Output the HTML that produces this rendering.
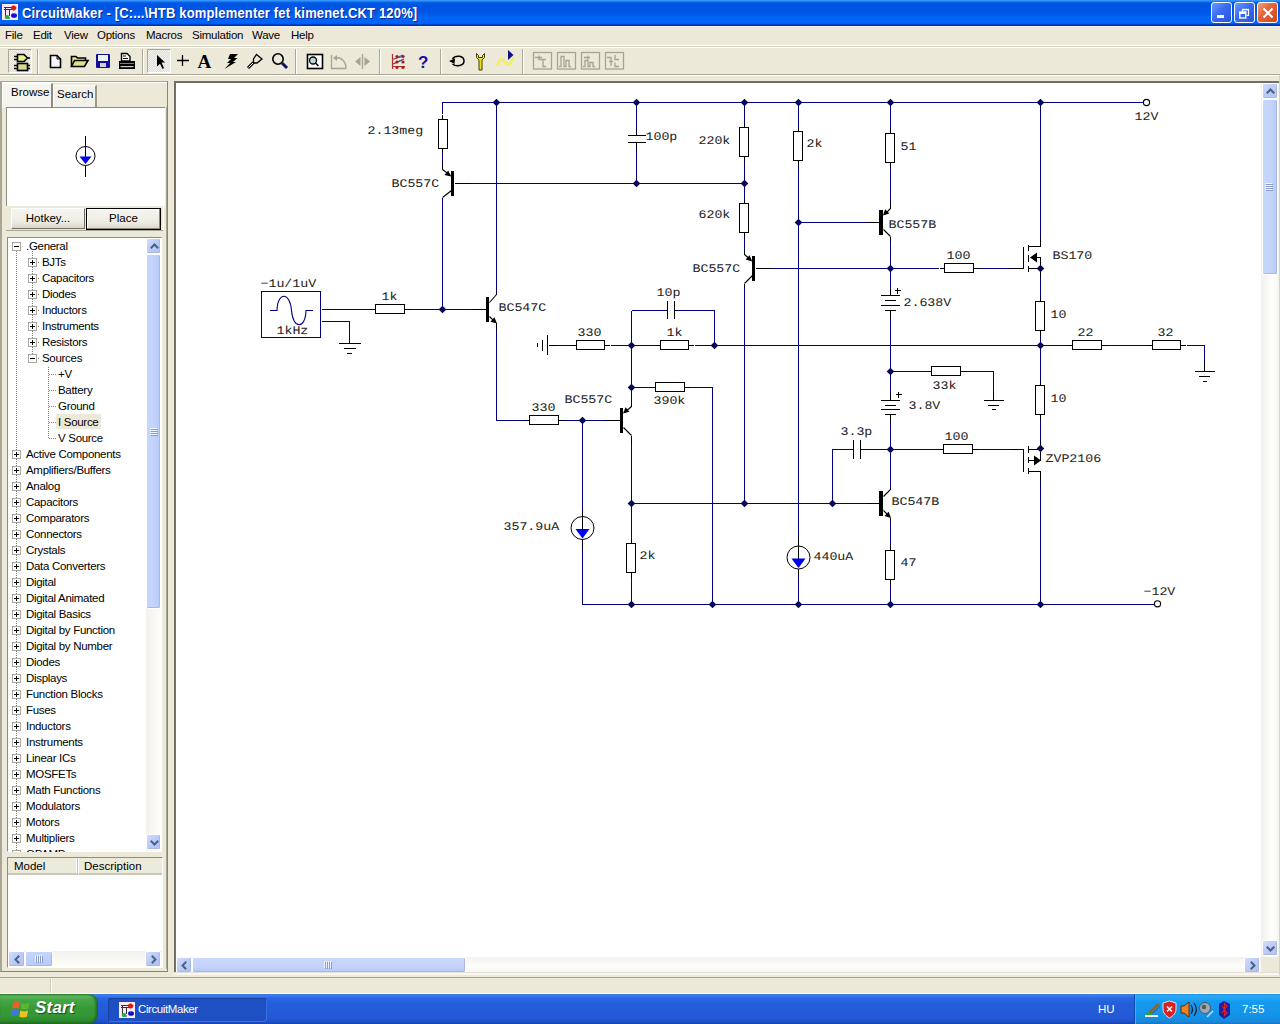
<!DOCTYPE html>
<html><head><meta charset="utf-8">
<style>
*{margin:0;padding:0;box-sizing:border-box}
html,body{width:1280px;height:1024px;overflow:hidden;background:#ECE9D8;font-family:"Liberation Sans",sans-serif;font-size:11px;color:#000}
.a{position:absolute}
svg{position:absolute;overflow:visible}
#title{left:0;top:0;width:1280px;height:27px;background:linear-gradient(#3A9AFF 0px,#2E8CFF 1px,#0A6AE8 2px,#0058E2 3px,#0054E3 6px,#0055E5 10px,#005AEC 14px,#0066F0 17px,#0064F8 20px,#0062FF 23px,#0058E8 24px,#0030A0 25px,#0030A0 25.9px,#F4F4FF 26px)}
#title .t{left:22px;top:4px;transform:scaleY(1.13);transform-origin:0 0;color:#fff;font-weight:bold;font-size:13px;letter-spacing:0.16px;text-shadow:1px 1px #0A2A9A;white-space:nowrap}
.wb{top:2px;width:21px;height:21px;border:1px solid #fff;border-radius:3px;background:linear-gradient(135deg,#6A9BFF 0%,#3A6CF0 45%,#2555DD 100%)}
#menu{left:0;top:27px;width:1280px;height:19px;background:#ECE9D8;box-shadow:inset 0 -1px #fff}
#menu span{position:absolute;top:2px;font-size:11.5px;white-space:nowrap;letter-spacing:-0.25px}
#tb{left:0;top:46px;width:1280px;height:29px;background:#ECE9D8;border-top:1px solid #D6D2C2;box-shadow:inset 0 1px #fff;border-bottom:1px solid #ACA899}
.sep{position:absolute;top:2px;width:2px;height:25px;border-left:1px solid #ACA899;border-right:1px solid #fff}
.pressed{position:absolute;top:2px;width:24px;height:24px;border-top:1px solid #ACA899;border-left:1px solid #ACA899;border-right:1px solid #fff;border-bottom:1px solid #fff;background-color:#F4F3EE;background-image:linear-gradient(45deg,#E0DED4 25%,transparent 25%,transparent 75%,#E0DED4 75%),linear-gradient(45deg,#E0DED4 25%,transparent 25%,transparent 75%,#E0DED4 75%);background-size:2px 2px;background-position:0 0,1px 1px}
#lp{left:0;top:75px;width:172px;height:900px;background:#ECE9D8}
#canvas{left:174px;top:81px;width:1106px;height:894px;background:#fff;border-top:2px solid #716F64;border-left:2px solid #716F64;border-right:1px solid #fff;overflow:hidden}
#status{left:0;top:975px;width:1280px;height:19px;background:#ECE9D8;border-bottom:1px solid #fff}
#task{left:0;top:994px;width:1280px;height:30px;background:linear-gradient(#3168D5 0px,#3D82F0 1px,#2A68E0 4px,#245EDB 10px,#2358D6 24px,#1E4FC8 28px,#1941A5 30px)}
.tree div{position:absolute;font-size:11.5px;white-space:nowrap;line-height:13px;left:0}
.sbtn{position:absolute;width:16px;height:16px;border:1px solid #fff;border-radius:2px;box-shadow:inset -1px -1px #A9B9E2;background:linear-gradient(135deg,#D0DDFC 0%,#BACBF7 50%,#AFC2F2 100%)}
.pm{position:absolute;width:9px;height:9px;border:1px solid #A8A8A0;background:#fff}
.pm:before{content:"";position:absolute;left:1px;top:3px;width:5px;height:1px;background:#000}
.pm.p:after{content:"";position:absolute;left:3px;top:1px;width:1px;height:5px;background:#000}
.btn{position:absolute;height:21px;border:1px solid #fff;border-right-color:#716F64;border-bottom-color:#716F64;background:#ECE9D8;text-align:center;line-height:18px;font-size:11.5px}
</style></head><body>
<div id="title" class="a">
  <svg style="left:2px;top:4px" width="16" height="16" viewBox="0 0 16 16">
    <rect x="0" y="0" width="16" height="16" fill="#FBE8F8"/>
    <path d="M2 3.5H10M2 5.5H10M3.5 3V14H8M7.5 5V12" stroke="#333" stroke-width="1" fill="none"/>
    <circle cx="11.5" cy="4" r="2.5" fill="#D02010"/><path d="M11 1.5L15 4L11 6.5Z" fill="#D02010"/>
    <ellipse cx="12" cy="11.5" rx="3" ry="2.3" fill="#1010C0"/>
    <ellipse cx="5" cy="13" rx="2.3" ry="2" fill="#20B040"/>
  </svg>
  <div class="a t">CircuitMaker - [C:...\HTB komplementer fet kimenet.CKT 120%]</div>
  <div class="a wb" style="left:1211px"><div class="a" style="left:5px;top:12px;width:7px;height:3px;background:#fff"></div></div>
  <div class="a wb" style="left:1234px"><svg style="left:4px;top:4px" width="12" height="12"><path d="M3.5 5.5V2.5H9.5V8.5H7.5" stroke="#fff" stroke-width="1.2" fill="none"/><rect x="0.8" y="5" width="6" height="6" stroke="#fff" stroke-width="1.4" fill="none"/><rect x="0.8" y="5" width="6" height="2" fill="#fff"/><rect x="3" y="1.8" width="7" height="1.6" fill="#fff"/></svg></div>
  <div class="a wb" style="left:1257px;background:linear-gradient(135deg,#F0A080 0%,#E5653A 40%,#D2451C 100%)"><svg style="left:4px;top:4px" width="12" height="12"><path d="M1.5 1.5L10.5 10.5M10.5 1.5L1.5 10.5" stroke="#fff" stroke-width="2"/></svg></div>
</div>
<div id="menu" class="a">
  <span style="left:5px">File</span><span style="left:33px">Edit</span><span style="left:64px">View</span><span style="left:97px">Options</span><span style="left:146px">Macros</span><span style="left:192px">Simulation</span><span style="left:252px">Wave</span><span style="left:291px">Help</span>
</div>
<div id="tb" class="a">
<div class="pressed" style="left:8px"></div>
<div class="pressed" style="left:147px"></div>
<div class="sep" style="left:37px"></div>
<div class="sep" style="left:142px"></div>
<div class="sep" style="left:295px"></div>
<div class="sep" style="left:379px"></div>
<div class="sep" style="left:440px"></div>
<div class="sep" style="left:522px"></div>
<svg style="left:0;top:-47px" width="1280" height="80" viewBox="0 0 1280 80">
 <!-- component icon -->
 <path d="M17.5 54.5H24L27.5 58L24 61.5H17.5Z" fill="#E8F088" stroke="#000" stroke-width="1.6"/>
 <path d="M14 56.5H17M14 59.5H17M27.5 58H30" stroke="#000" stroke-width="1.5"/>
 <rect x="17.5" y="63.5" width="10" height="7" fill="#D8D890" stroke="#000" stroke-width="1.6"/>
 <path d="M14 65.5H17M14 68.5H17M28 65.5H30M28 68.5H30" stroke="#000" stroke-width="1.5"/>
 <!-- new -->
 <path d="M50.5 55.5H57L60.5 59V67.5H50.5Z" fill="#F4F4FF" stroke="#000" stroke-width="1.6"/>
 <path d="M57 55.5V59H60.5" fill="none" stroke="#000" stroke-width="1"/>
 <!-- open -->
 <path d="M71.5 66.5V56.5H76L77.5 58H85.5V60" fill="#E8E890" stroke="#000" stroke-width="1.6"/>
 <path d="M71.5 66.5L74.5 60.5H88L84.5 66.5Z" fill="#E0E080" stroke="#000" stroke-width="1.6"/>
 <!-- save -->
 <rect x="96" y="54" width="14" height="14" rx="1" fill="#10109A"/>
 <rect x="98" y="55" width="10" height="6" fill="#F0F0F0"/>
 <rect x="100" y="63" width="6" height="4" fill="#D0D0E0"/>
 <!-- print -->
 <path d="M121.5 53.5H127L130 56.5V61H121.5Z" fill="#fff" stroke="#000" stroke-width="1.4"/>
 <path d="M123 56H126M123 58.5H128" stroke="#000" stroke-width="1"/>
 <rect x="119" y="61" width="16" height="8" fill="#000"/>
 <path d="M120.5 63.5H133.5" stroke="#fff" stroke-width="1" stroke-dasharray="1 1"/>
 <rect x="120.5" y="66" width="13" height="1.2" fill="#ccc"/>
 <!-- arrow -->
 <path d="M157 55L165 62.5L161.5 62.5L164 68L162.5 69L160 63.8L157 66.5Z" fill="#000"/>
 <!-- plus -->
 <path d="M177 60.5H189M182.5 55V66" stroke="#000" stroke-width="1.3"/>
 <!-- A -->
 <text x="197.5" y="68" font-family="Liberation Serif" font-weight="bold" font-size="19" fill="#000">A</text>
 <!-- lightning -->
 <path d="M230 54L238 54L234 58L237.5 58L233 62L236 62L224.5 69L230 63L227 63L231 59L228 59Z" fill="#000"/>
 <!-- probe -->
 <path d="M256.5 54.5L262 59L257 63H253.5V59Z" fill="none" stroke="#000" stroke-width="1.3"/>
 <path d="M253.5 62.5L248 68" stroke="#000" stroke-width="3"/>
 <path d="M253 63L248.5 67.5" stroke="#fff" stroke-width="1"/>
 <!-- magnifier -->
 <circle cx="278" cy="59" r="5.2" fill="none" stroke="#000" stroke-width="1.6"/>
 <path d="M282 63L287 68" stroke="#10106A" stroke-width="3"/>
 <!-- zoom page -->
 <rect x="307.5" y="54.5" width="15" height="14" fill="#fff" stroke="#000" stroke-width="1.6"/>
 <circle cx="313" cy="60.5" r="3.5" fill="#B8D8D0" stroke="#000" stroke-width="1.3"/>
 <path d="M315.5 63L318.5 66" stroke="#000" stroke-width="1.5"/>
 <!-- rotate gray -->
 <path d="M331.5 55V68.5H346.5M336 57.5C342 57.5 346 62 346 68" fill="none" stroke="#A8A493" stroke-width="1.3"/>
 <path d="M333 58L337 55V61Z" fill="#A8A493"/>
 <!-- mirror gray -->
 <path d="M362.5 54V69" stroke="#A8A493" stroke-width="1.3"/>
 <path d="M360.5 57V66L355 61.5Z M364.5 57V66L370 61.5Z" fill="#A8A493"/>
 <!-- netlist -->
 <path d="M392.5 54V69M392 66.5H405M392 59.5L404 56M393 64L404 59" stroke="#B03030" stroke-width="1.2" fill="none"/>
 <path d="M396 58L403 55M395 63L402 60" stroke="#3060C0" stroke-width="1.3"/>
 <circle cx="397" cy="56.5" r="1.6" fill="#A02020"/><circle cx="403" cy="56.5" r="1.6" fill="#A02020"/>
 <circle cx="397" cy="62" r="1.6" fill="#A02020"/><circle cx="403" cy="62" r="1.6" fill="#A02020"/>
 <circle cx="397" cy="67.5" r="1.6" fill="#A02020"/><circle cx="403" cy="67.5" r="1.6" fill="#A02020"/>
 <!-- help -->
 <text x="418" y="68" font-family="Liberation Sans" font-weight="bold" font-size="17" fill="#1010B0">?</text>
 <!-- undo loop -->
 <path d="M452.5 59C455 55 464 55 464 61C464 66 456 67 452.5 64" fill="none" stroke="#000" stroke-width="1.5"/>
 <path d="M449 61L455 58.5L454.5 64Z" fill="#000"/>
 <!-- wrench yellow -->
 <path d="M476.5 53.5V57.5L479 60V70H482V60L484.5 57.5V53.5L482.5 55.5V57.5H478.5V55.5Z" fill="#E8E020" stroke="#404000" stroke-width="1"/>
 <!-- wave -->
 <path d="M497 66C500 58 503 58 505 62C507 66 510 66 513 58" fill="none" stroke="#F0F060" stroke-width="2.6"/>
 <path d="M508 50L513.5 55L508 60Z" fill="#10107A"/>
 <!-- gray boxes -->
 <g fill="none" stroke="#A8A493" stroke-width="1.3">
  <rect x="533.5" y="52.5" width="18" height="16.5"/><path d="M535 57.5H539M539 55.5V59.5H546M543 59.5V66.5H546M539 57.5H542"/>
  <rect x="557.5" y="52.5" width="18" height="16.5"/><path d="M559 66.5H561V56.5H564V66.5H566V60.5H569V66.5H571"/>
  <rect x="581.5" y="52.5" width="18" height="16.5"/><path d="M583 66.5H585V60.5H588V66.5H590V62.5H593V66.5H595M584 57.5H590M588 55.5V59.5"/>
  <rect x="605.5" y="52.5" width="18" height="16.5"/><path d="M607 57.5H611V66M609 61.5H613M615 55V59.5H619M615 62.5V66.5H619"/>
 </g>
</svg>

</div>
<div class="a" style="left:0;top:75px;width:1280px;height:1px;background:#fff"></div>
<div id="lp" class="a" style="top:76px;height:899px">
<div class="a" style="left:0;top:-76px;width:175px;height:1024px">
<div class="a" style="left:0;top:81px;width:168px;height:891px;border-left:2px solid #A9A696;border-top:1px solid #A9A696;border-right:1px solid #85837A;border-bottom:1px solid #85837A"></div>
<div class="a" style="left:2px;top:82px;width:165px;height:1px;background:#fff"></div>
<div class="a" style="left:53px;top:85px;width:44px;height:22px;background:#F2F1EA;border-top:1px solid #fff;border-left:1px solid #fff;border-right:2px solid #9C9A8E"></div>
<div class="a" style="left:2px;top:83px;width:51px;height:25px;background:#F5F4EE;border-top:1px solid #fff;border-left:1px solid #fff;border-right:2px solid #8E8C80"></div>
<div class="a" style="left:11px;top:86px;font-size:11.5px">Browse</div>
<div class="a" style="left:57px;top:88px;font-size:11.5px">Search</div>
<div class="a" style="left:166px;top:107px;width:1px;height:862px;background:#A9A696"></div>
<div class="a" style="left:6px;top:107px;width:159px;height:99px;background:#fff;border-top:1px solid #8E8C80;border-left:1px solid #8E8C80"></div>
<svg style="left:70px;top:130px" width="30" height="50" viewBox="70 130 30 50"><path d="M85.5 136V146.5M85.5 165.5V177" stroke="#000"/><circle cx="85.5" cy="156" r="9.5" fill="none" stroke="#000"/><path d="M85.5 146.5V157" stroke="#000"/><path d="M79.5 156.5H91.5L85.5 164Z" fill="#0000F0"/></svg>
<div class="a" style="left:6px;top:206px;width:158px;height:25px;border-bottom:1px solid #A9A696;border-right:1px solid #fff"></div>
<div class="btn" style="left:11px;top:208px;width:74px;background:linear-gradient(#F6F5F0,#ECEBE3 70%,#D8D5C8)">Hotkey...</div>
<div class="btn" style="left:86px;top:208px;width:75px;height:22px;border:1px solid #000;box-shadow:inset -1px -1px #8E8C80,inset 1px 1px #fff;background:linear-gradient(#F6F5F0,#ECEBE3 70%,#D8D5C8)">Place</div>
<div class="a" style="left:7px;top:237px;width:155px;height:615px;background:#fff;border-top:1px solid #8E8C80;border-left:1px solid #8E8C80;border-right:1px solid #fff;border-bottom:1px solid #fff"></div>
<div class="a" style="left:146px;top:238px;width:15px;height:613px;background:linear-gradient(90deg,#F3F1EC,#FEFEFB)"></div>
<div class="sbtn" style="left:146px;top:238px;width:15px;height:16px"><svg style="left:3px;top:4px" width="9" height="6"><path d="M0.8 5.2L4.5 1.5L8.2 5.2" stroke="#4D6185" stroke-width="2" fill="none"/></svg></div>
<div class="sbtn" style="left:146px;top:254px;width:15px;height:355px;background:linear-gradient(90deg,#C6D5FC,#C2D2FB 60%,#B6C9F8)"></div>
<svg style="left:150px;top:428px" width="8" height="9"><path d="M0 0.5H7M0 2.5H7M0 4.5H7M0 6.5H7" stroke="#EEF4FF"/><path d="M1 1.5H8M1 3.5H8M1 5.5H8M1 7.5H8" stroke="#8A9CC8"/></svg>
<div class="sbtn" style="left:146px;top:834px;width:15px;height:16px"><svg style="left:3px;top:5px" width="9" height="6"><path d="M0.8 0.8L4.5 4.5L8.2 0.8" stroke="#4D6185" stroke-width="2" fill="none"/></svg></div>
<div class="a" style="left:8px;top:238px;width:138px;height:614px;overflow:hidden">
<div class="a" style="left:8px;top:13px;width:1px;height:649px;background-image:linear-gradient(#808080 50%,transparent 50%);background-size:1px 2px"></div>
<div class="a" style="left:24px;top:13px;width:1px;height:111px;background-image:linear-gradient(#808080 50%,transparent 50%);background-size:1px 2px"></div>
<div class="a" style="left:24px;top:24px;width:8px;height:1px;background-image:linear-gradient(90deg,#808080 50%,transparent 50%);background-size:2px 1px"></div>
<div class="a" style="left:24px;top:40px;width:8px;height:1px;background-image:linear-gradient(90deg,#808080 50%,transparent 50%);background-size:2px 1px"></div>
<div class="a" style="left:24px;top:56px;width:8px;height:1px;background-image:linear-gradient(90deg,#808080 50%,transparent 50%);background-size:2px 1px"></div>
<div class="a" style="left:24px;top:72px;width:8px;height:1px;background-image:linear-gradient(90deg,#808080 50%,transparent 50%);background-size:2px 1px"></div>
<div class="a" style="left:24px;top:88px;width:8px;height:1px;background-image:linear-gradient(90deg,#808080 50%,transparent 50%);background-size:2px 1px"></div>
<div class="a" style="left:24px;top:104px;width:8px;height:1px;background-image:linear-gradient(90deg,#808080 50%,transparent 50%);background-size:2px 1px"></div>
<div class="a" style="left:24px;top:120px;width:8px;height:1px;background-image:linear-gradient(90deg,#808080 50%,transparent 50%);background-size:2px 1px"></div>
<div class="a" style="left:40px;top:129px;width:1px;height:71px;background-image:linear-gradient(#808080 50%,transparent 50%);background-size:1px 2px"></div>
<div class="a" style="left:41px;top:136px;width:8px;height:1px;background-image:linear-gradient(90deg,#808080 50%,transparent 50%);background-size:2px 1px"></div>
<div class="a" style="left:41px;top:152px;width:8px;height:1px;background-image:linear-gradient(90deg,#808080 50%,transparent 50%);background-size:2px 1px"></div>
<div class="a" style="left:41px;top:168px;width:8px;height:1px;background-image:linear-gradient(90deg,#808080 50%,transparent 50%);background-size:2px 1px"></div>
<div class="a" style="left:41px;top:184px;width:8px;height:1px;background-image:linear-gradient(90deg,#808080 50%,transparent 50%);background-size:2px 1px"></div>
<div class="a" style="left:41px;top:200px;width:8px;height:1px;background-image:linear-gradient(90deg,#808080 50%,transparent 50%);background-size:2px 1px"></div>
<div class="pm " style="left:4px;top:4px"></div>
<div class="a" style="left:18px;top:2px;font-size:11.5px;line-height:13px;white-space:nowrap;letter-spacing:-0.3px">.General</div>
<div class="pm p" style="left:20px;top:20px"></div>
<div class="a" style="left:34px;top:18px;font-size:11.5px;line-height:13px;white-space:nowrap;letter-spacing:-0.3px">BJTs</div>
<div class="pm p" style="left:20px;top:36px"></div>
<div class="a" style="left:34px;top:34px;font-size:11.5px;line-height:13px;white-space:nowrap;letter-spacing:-0.3px">Capacitors</div>
<div class="pm p" style="left:20px;top:52px"></div>
<div class="a" style="left:34px;top:50px;font-size:11.5px;line-height:13px;white-space:nowrap;letter-spacing:-0.3px">Diodes</div>
<div class="pm p" style="left:20px;top:68px"></div>
<div class="a" style="left:34px;top:66px;font-size:11.5px;line-height:13px;white-space:nowrap;letter-spacing:-0.3px">Inductors</div>
<div class="pm p" style="left:20px;top:84px"></div>
<div class="a" style="left:34px;top:82px;font-size:11.5px;line-height:13px;white-space:nowrap;letter-spacing:-0.3px">Instruments</div>
<div class="pm p" style="left:20px;top:100px"></div>
<div class="a" style="left:34px;top:98px;font-size:11.5px;line-height:13px;white-space:nowrap;letter-spacing:-0.3px">Resistors</div>
<div class="pm " style="left:20px;top:116px"></div>
<div class="a" style="left:34px;top:114px;font-size:11.5px;line-height:13px;white-space:nowrap;letter-spacing:-0.3px">Sources</div>
<div class="a" style="left:50px;top:130px;font-size:11.5px;line-height:13px;white-space:nowrap;letter-spacing:-0.3px">+V</div>
<div class="a" style="left:50px;top:146px;font-size:11.5px;line-height:13px;white-space:nowrap;letter-spacing:-0.3px">Battery</div>
<div class="a" style="left:50px;top:162px;font-size:11.5px;line-height:13px;white-space:nowrap;letter-spacing:-0.3px">Ground</div>
<div class="a" style="left:48px;top:176px;width:45px;height:15px;background:#ECE9D8"></div>
<div class="a" style="left:50px;top:178px;font-size:11.5px;line-height:13px;white-space:nowrap;letter-spacing:-0.3px">I Source</div>
<div class="a" style="left:50px;top:194px;font-size:11.5px;line-height:13px;white-space:nowrap;letter-spacing:-0.3px">V Source</div>
<div class="pm p" style="left:4px;top:212px"></div>
<div class="a" style="left:18px;top:210px;font-size:11.5px;line-height:13px;white-space:nowrap;letter-spacing:-0.3px">Active Components</div>
<div class="pm p" style="left:4px;top:228px"></div>
<div class="a" style="left:18px;top:226px;font-size:11.5px;line-height:13px;white-space:nowrap;letter-spacing:-0.3px">Amplifiers/Buffers</div>
<div class="pm p" style="left:4px;top:244px"></div>
<div class="a" style="left:18px;top:242px;font-size:11.5px;line-height:13px;white-space:nowrap;letter-spacing:-0.3px">Analog</div>
<div class="pm p" style="left:4px;top:260px"></div>
<div class="a" style="left:18px;top:258px;font-size:11.5px;line-height:13px;white-space:nowrap;letter-spacing:-0.3px">Capacitors</div>
<div class="pm p" style="left:4px;top:276px"></div>
<div class="a" style="left:18px;top:274px;font-size:11.5px;line-height:13px;white-space:nowrap;letter-spacing:-0.3px">Comparators</div>
<div class="pm p" style="left:4px;top:292px"></div>
<div class="a" style="left:18px;top:290px;font-size:11.5px;line-height:13px;white-space:nowrap;letter-spacing:-0.3px">Connectors</div>
<div class="pm p" style="left:4px;top:308px"></div>
<div class="a" style="left:18px;top:306px;font-size:11.5px;line-height:13px;white-space:nowrap;letter-spacing:-0.3px">Crystals</div>
<div class="pm p" style="left:4px;top:324px"></div>
<div class="a" style="left:18px;top:322px;font-size:11.5px;line-height:13px;white-space:nowrap;letter-spacing:-0.3px">Data Converters</div>
<div class="pm p" style="left:4px;top:340px"></div>
<div class="a" style="left:18px;top:338px;font-size:11.5px;line-height:13px;white-space:nowrap;letter-spacing:-0.3px">Digital</div>
<div class="pm p" style="left:4px;top:356px"></div>
<div class="a" style="left:18px;top:354px;font-size:11.5px;line-height:13px;white-space:nowrap;letter-spacing:-0.3px">Digital Animated</div>
<div class="pm p" style="left:4px;top:372px"></div>
<div class="a" style="left:18px;top:370px;font-size:11.5px;line-height:13px;white-space:nowrap;letter-spacing:-0.3px">Digital Basics</div>
<div class="pm p" style="left:4px;top:388px"></div>
<div class="a" style="left:18px;top:386px;font-size:11.5px;line-height:13px;white-space:nowrap;letter-spacing:-0.3px">Digital by Function</div>
<div class="pm p" style="left:4px;top:404px"></div>
<div class="a" style="left:18px;top:402px;font-size:11.5px;line-height:13px;white-space:nowrap;letter-spacing:-0.3px">Digital by Number</div>
<div class="pm p" style="left:4px;top:420px"></div>
<div class="a" style="left:18px;top:418px;font-size:11.5px;line-height:13px;white-space:nowrap;letter-spacing:-0.3px">Diodes</div>
<div class="pm p" style="left:4px;top:436px"></div>
<div class="a" style="left:18px;top:434px;font-size:11.5px;line-height:13px;white-space:nowrap;letter-spacing:-0.3px">Displays</div>
<div class="pm p" style="left:4px;top:452px"></div>
<div class="a" style="left:18px;top:450px;font-size:11.5px;line-height:13px;white-space:nowrap;letter-spacing:-0.3px">Function Blocks</div>
<div class="pm p" style="left:4px;top:468px"></div>
<div class="a" style="left:18px;top:466px;font-size:11.5px;line-height:13px;white-space:nowrap;letter-spacing:-0.3px">Fuses</div>
<div class="pm p" style="left:4px;top:484px"></div>
<div class="a" style="left:18px;top:482px;font-size:11.5px;line-height:13px;white-space:nowrap;letter-spacing:-0.3px">Inductors</div>
<div class="pm p" style="left:4px;top:500px"></div>
<div class="a" style="left:18px;top:498px;font-size:11.5px;line-height:13px;white-space:nowrap;letter-spacing:-0.3px">Instruments</div>
<div class="pm p" style="left:4px;top:516px"></div>
<div class="a" style="left:18px;top:514px;font-size:11.5px;line-height:13px;white-space:nowrap;letter-spacing:-0.3px">Linear ICs</div>
<div class="pm p" style="left:4px;top:532px"></div>
<div class="a" style="left:18px;top:530px;font-size:11.5px;line-height:13px;white-space:nowrap;letter-spacing:-0.3px">MOSFETs</div>
<div class="pm p" style="left:4px;top:548px"></div>
<div class="a" style="left:18px;top:546px;font-size:11.5px;line-height:13px;white-space:nowrap;letter-spacing:-0.3px">Math Functions</div>
<div class="pm p" style="left:4px;top:564px"></div>
<div class="a" style="left:18px;top:562px;font-size:11.5px;line-height:13px;white-space:nowrap;letter-spacing:-0.3px">Modulators</div>
<div class="pm p" style="left:4px;top:580px"></div>
<div class="a" style="left:18px;top:578px;font-size:11.5px;line-height:13px;white-space:nowrap;letter-spacing:-0.3px">Motors</div>
<div class="pm p" style="left:4px;top:596px"></div>
<div class="a" style="left:18px;top:594px;font-size:11.5px;line-height:13px;white-space:nowrap;letter-spacing:-0.3px">Multipliers</div>
<div class="pm p" style="left:4px;top:612px"></div>
<div class="a" style="left:18px;top:610px;font-size:11.5px;line-height:13px;white-space:nowrap;letter-spacing:-0.3px">OPAMPs</div>
</div>
<div class="a" style="left:7px;top:857px;width:156px;height:111px;background:#fff;border-top:1px solid #8E8C80;border-left:1px solid #8E8C80;border-right:1px solid #fff;border-bottom:1px solid #fff"></div>
<div class="a" style="left:8px;top:858px;width:70px;height:17px;background:#EBEADB;border-bottom:2px solid #CBC7B8;border-right:1px solid #C8C4B5;box-shadow:inset -1px 0 #fff"></div>
<div class="a" style="left:78px;top:858px;width:84px;height:17px;background:#EBEADB;border-bottom:2px solid #CBC7B8;border-left:1px solid #fff"></div>
<div class="a" style="left:14px;top:860px;font-size:11.5px">Model</div>
<div class="a" style="left:84px;top:860px;font-size:11.5px">Description</div>
<div class="a" style="left:8px;top:951px;width:154px;height:16px;background:linear-gradient(#F3F1EC,#FEFEFB)"></div>
<div class="sbtn" style="left:8px;top:951px;width:17px;height:16px"><svg style="left:5px;top:3px" width="6" height="9"><path d="M5.2 0.8L1.5 4.5L5.2 8.2" stroke="#4D6185" stroke-width="2" fill="none"/></svg></div>
<div class="sbtn" style="left:25px;top:951px;width:28px;height:16px;background:linear-gradient(#C6D5FC,#B8CAF7)"><svg style="left:9px;top:3px" width="9" height="8"><path d="M0.5 0V7M2.5 0V7M4.5 0V7M6.5 0V7" stroke="#EEF4FF"/><path d="M1.5 1V8M3.5 1V8M5.5 1V8M7.5 1V8" stroke="#8A9CC8"/></svg></div>
<div class="sbtn" style="left:145px;top:951px;width:16px;height:16px"><svg style="left:5px;top:3px" width="6" height="9"><path d="M0.8 0.8L4.5 4.5L0.8 8.2" stroke="#4D6185" stroke-width="2" fill="none"/></svg></div>
</div>
</div>
<div id="canvas" class="a"></div>
<svg class="a" style="left:0;top:0" width="1280" height="1024" viewBox="0 0 1280 1024"><g shape-rendering="crispEdges"><polyline points="442.5,113.5 442.5,102.5 1143.5,102.5" fill="none" stroke="#000080"/>
<polyline points="582.5,538.5 582.5,604.5 1154.5,604.5" fill="none" stroke="#000080"/>
<polyline points="442.5,148.5 442.5,162.5" fill="none" stroke="#000080"/>
<polyline points="442.5,197.5 442.5,309.5" fill="none" stroke="#000080"/>
<polyline points="321.5,309.5 370.5,309.5" fill="none" stroke="#000080"/>
<polyline points="409.5,309.5 470.5,309.5" fill="none" stroke="#000080"/>
<polyline points="321.5,321.5 349.5,321.5 349.5,343.5" fill="none" stroke="#000080"/>
<polyline points="496.5,102.5 496.5,293.5" fill="none" stroke="#000080"/>
<polyline points="496.5,329.5 496.5,420.5 524.5,420.5" fill="none" stroke="#000080"/>
<polyline points="563.5,420.5 604.5,420.5" fill="none" stroke="#000080"/>
<polyline points="582.5,420.5 582.5,508.5" fill="none" stroke="#000080"/>
<polyline points="454.5,183.5 744.5,183.5" fill="none" stroke="#000080"/>
<polyline points="636.5,102.5 636.5,130.5" fill="none" stroke="#000080"/>
<polyline points="636.5,147.5 636.5,183.5" fill="none" stroke="#000080"/>
<polyline points="744.5,102.5 744.5,122.5" fill="none" stroke="#000080"/>
<polyline points="744.5,161.5 744.5,198.5" fill="none" stroke="#000080"/>
<polyline points="744.5,237.5 744.5,248.5" fill="none" stroke="#000080"/>
<polyline points="744.5,285.5 744.5,503.5" fill="none" stroke="#000080"/>
<polyline points="755.5,268.5 938.5,268.5" fill="none" stroke="#000080"/>
<polyline points="978.5,268.5 1010.5,268.5" fill="none" stroke="#000080"/>
<polyline points="798.5,102.5 798.5,126.5" fill="none" stroke="#000080"/>
<polyline points="798.5,165.5 798.5,538.5" fill="none" stroke="#000080"/>
<polyline points="798.5,575.5 798.5,604.5" fill="none" stroke="#000080"/>
<polyline points="798.5,222.5 866.5,222.5" fill="none" stroke="#000080"/>
<polyline points="890.5,102.5 890.5,128.5" fill="none" stroke="#000080"/>
<polyline points="890.5,167.5 890.5,204.5" fill="none" stroke="#000080"/>
<polyline points="890.5,239.5 890.5,289.5" fill="none" stroke="#000080"/>
<polyline points="890.5,316.5 890.5,394.5" fill="none" stroke="#000080"/>
<polyline points="890.5,420.5 890.5,486.5" fill="none" stroke="#000080"/>
<polyline points="890.5,521.5 890.5,545.5" fill="none" stroke="#000080"/>
<polyline points="890.5,584.5 890.5,604.5" fill="none" stroke="#000080"/>
<polyline points="1040.5,102.5 1040.5,237.5" fill="none" stroke="#000080"/>
<polyline points="1040.5,277.5 1040.5,296.5" fill="none" stroke="#000080"/>
<polyline points="1040.5,335.5 1040.5,380.5" fill="none" stroke="#000080"/>
<polyline points="1040.5,419.5 1040.5,440.5" fill="none" stroke="#000080"/>
<polyline points="1040.5,480.5 1040.5,604.5" fill="none" stroke="#000080"/>
<polyline points="556.5,345.5 571.5,345.5" fill="none" stroke="#000080"/>
<polyline points="610.5,345.5 655.5,345.5" fill="none" stroke="#000080"/>
<polyline points="694.5,345.5 1067.5,345.5" fill="none" stroke="#000080"/>
<polyline points="1106.5,345.5 1147.5,345.5" fill="none" stroke="#000080"/>
<polyline points="1186.5,345.5 1204.5,345.5 1204.5,363.5" fill="none" stroke="#000080"/>
<polyline points="631.5,310.5 667.5,310.5" fill="none" stroke="#000080"/>
<polyline points="674.5,310.5 714.5,310.5 714.5,345.5" fill="none" stroke="#000080"/>
<polyline points="631.5,310.5 631.5,398.5" fill="none" stroke="#000080"/>
<polyline points="631.5,443.5 631.5,538.5" fill="none" stroke="#000080"/>
<polyline points="631.5,577.5 631.5,604.5" fill="none" stroke="#000080"/>
<polyline points="631.5,387.5 650.5,387.5" fill="none" stroke="#000080"/>
<polyline points="689.5,387.5 712.5,387.5 712.5,604.5" fill="none" stroke="#000080"/>
<polyline points="631.5,503.5 866.5,503.5" fill="none" stroke="#000080"/>
<polyline points="832.5,503.5 832.5,449.5 853.5,449.5" fill="none" stroke="#000080"/>
<polyline points="860.5,449.5 938.5,449.5" fill="none" stroke="#000080"/>
<polyline points="977.5,449.5 1010.5,449.5" fill="none" stroke="#000080"/>
<polyline points="890.5,371.5 926.5,371.5" fill="none" stroke="#000080"/>
<polyline points="965.5,371.5 993.5,371.5 993.5,392.5" fill="none" stroke="#000080"/>
<rect x="261.5" y="291.5" width="59" height="46" fill="none" stroke="#000080"/>
<line x1="349.5" y1="337.5" x2="349.5" y2="343.5" stroke="#000" stroke-width="1"/>
<line x1="338.5" y1="343.5" x2="360.5" y2="343.5" stroke="#000" stroke-width="1"/>
<line x1="343.5" y1="348.5" x2="355.5" y2="348.5" stroke="#000" stroke-width="1"/>
<line x1="346.5" y1="353.5" x2="351.5" y2="353.5" stroke="#000" stroke-width="1"/>
<line x1="442.5" y1="114.5" x2="442.5" y2="119.5" stroke="#000" stroke-width="1"/>
<line x1="442.5" y1="148.5" x2="442.5" y2="153.5" stroke="#000" stroke-width="1"/>
<rect x="438.5" y="119.5" width="9" height="29" fill="#fff" stroke="#000"/>
<line x1="744.5" y1="122.5" x2="744.5" y2="127.5" stroke="#000" stroke-width="1"/>
<line x1="744.5" y1="156.5" x2="744.5" y2="161.5" stroke="#000" stroke-width="1"/>
<rect x="739.5" y="127.5" width="9" height="29" fill="#fff" stroke="#000"/>
<line x1="744.5" y1="198.5" x2="744.5" y2="203.5" stroke="#000" stroke-width="1"/>
<line x1="744.5" y1="232.5" x2="744.5" y2="237.5" stroke="#000" stroke-width="1"/>
<rect x="739.5" y="203.5" width="9" height="29" fill="#fff" stroke="#000"/>
<line x1="798.5" y1="126.5" x2="798.5" y2="131.5" stroke="#000" stroke-width="1"/>
<line x1="798.5" y1="160.5" x2="798.5" y2="165.5" stroke="#000" stroke-width="1"/>
<rect x="793.5" y="131.5" width="9" height="29" fill="#fff" stroke="#000"/>
<line x1="890.5" y1="128.5" x2="890.5" y2="133.5" stroke="#000" stroke-width="1"/>
<line x1="890.5" y1="162.5" x2="890.5" y2="167.5" stroke="#000" stroke-width="1"/>
<rect x="885.5" y="133.5" width="9" height="29" fill="#fff" stroke="#000"/>
<line x1="1040.5" y1="296.5" x2="1040.5" y2="301.5" stroke="#000" stroke-width="1"/>
<line x1="1040.5" y1="330.5" x2="1040.5" y2="335.5" stroke="#000" stroke-width="1"/>
<rect x="1035.5" y="301.5" width="9" height="29" fill="#fff" stroke="#000"/>
<line x1="1040.5" y1="380.5" x2="1040.5" y2="385.5" stroke="#000" stroke-width="1"/>
<line x1="1040.5" y1="414.5" x2="1040.5" y2="419.5" stroke="#000" stroke-width="1"/>
<rect x="1035.5" y="385.5" width="9" height="29" fill="#fff" stroke="#000"/>
<line x1="631.5" y1="538.5" x2="631.5" y2="543.5" stroke="#000" stroke-width="1"/>
<line x1="631.5" y1="572.5" x2="631.5" y2="577.5" stroke="#000" stroke-width="1"/>
<rect x="626.5" y="543.5" width="9" height="29" fill="#fff" stroke="#000"/>
<line x1="890.5" y1="545.5" x2="890.5" y2="550.5" stroke="#000" stroke-width="1"/>
<line x1="890.5" y1="579.5" x2="890.5" y2="584.5" stroke="#000" stroke-width="1"/>
<rect x="885.5" y="550.5" width="9" height="29" fill="#fff" stroke="#000"/>
<line x1="370.5" y1="309.5" x2="375.5" y2="309.5" stroke="#000" stroke-width="1"/>
<line x1="404.5" y1="309.5" x2="409.5" y2="309.5" stroke="#000" stroke-width="1"/>
<rect x="375.5" y="304.5" width="29" height="9" fill="#fff" stroke="#000"/>
<line x1="571.5" y1="345.5" x2="576.5" y2="345.5" stroke="#000" stroke-width="1"/>
<line x1="604.5" y1="345.5" x2="609.5" y2="345.5" stroke="#000" stroke-width="1"/>
<rect x="576.5" y="340.5" width="28" height="9" fill="#fff" stroke="#000"/>
<line x1="655.5" y1="345.5" x2="660.5" y2="345.5" stroke="#000" stroke-width="1"/>
<line x1="688.5" y1="345.5" x2="693.5" y2="345.5" stroke="#000" stroke-width="1"/>
<rect x="660.5" y="340.5" width="28" height="9" fill="#fff" stroke="#000"/>
<line x1="524.5" y1="420.5" x2="529.5" y2="420.5" stroke="#000" stroke-width="1"/>
<line x1="558.5" y1="420.5" x2="563.5" y2="420.5" stroke="#000" stroke-width="1"/>
<rect x="529.5" y="415.5" width="29" height="9" fill="#fff" stroke="#000"/>
<line x1="650.5" y1="387.5" x2="655.5" y2="387.5" stroke="#000" stroke-width="1"/>
<line x1="684.5" y1="387.5" x2="689.5" y2="387.5" stroke="#000" stroke-width="1"/>
<rect x="655.5" y="382.5" width="29" height="9" fill="#fff" stroke="#000"/>
<line x1="939.5" y1="268.5" x2="944.5" y2="268.5" stroke="#000" stroke-width="1"/>
<line x1="973.5" y1="268.5" x2="978.5" y2="268.5" stroke="#000" stroke-width="1"/>
<rect x="944.5" y="263.5" width="29" height="9" fill="#fff" stroke="#000"/>
<line x1="926.5" y1="371.5" x2="931.5" y2="371.5" stroke="#000" stroke-width="1"/>
<line x1="960.5" y1="371.5" x2="965.5" y2="371.5" stroke="#000" stroke-width="1"/>
<rect x="931.5" y="366.5" width="29" height="9" fill="#fff" stroke="#000"/>
<line x1="938.5" y1="449.5" x2="943.5" y2="449.5" stroke="#000" stroke-width="1"/>
<line x1="972.5" y1="449.5" x2="977.5" y2="449.5" stroke="#000" stroke-width="1"/>
<rect x="943.5" y="444.5" width="29" height="9" fill="#fff" stroke="#000"/>
<line x1="1067.5" y1="345.5" x2="1072.5" y2="345.5" stroke="#000" stroke-width="1"/>
<line x1="1101.5" y1="345.5" x2="1106.5" y2="345.5" stroke="#000" stroke-width="1"/>
<rect x="1072.5" y="340.5" width="29" height="9" fill="#fff" stroke="#000"/>
<line x1="1147.5" y1="345.5" x2="1152.5" y2="345.5" stroke="#000" stroke-width="1"/>
<line x1="1180.5" y1="345.5" x2="1185.5" y2="345.5" stroke="#000" stroke-width="1"/>
<rect x="1152.5" y="340.5" width="28" height="9" fill="#fff" stroke="#000"/>
<line x1="627.5" y1="135.5" x2="645.5" y2="135.5" stroke="#000" stroke-width="1"/>
<line x1="627.5" y1="142.5" x2="645.5" y2="142.5" stroke="#000" stroke-width="1"/>
<line x1="636.5" y1="130.5" x2="636.5" y2="135.5" stroke="#000" stroke-width="1"/>
<line x1="636.5" y1="142.5" x2="636.5" y2="147.5" stroke="#000" stroke-width="1"/>
<line x1="667.5" y1="300.5" x2="667.5" y2="318.5" stroke="#000" stroke-width="1"/>
<line x1="674.5" y1="300.5" x2="674.5" y2="318.5" stroke="#000" stroke-width="1"/>
<line x1="853.5" y1="439.5" x2="853.5" y2="458.5" stroke="#000" stroke-width="1"/>
<line x1="860.5" y1="439.5" x2="860.5" y2="458.5" stroke="#000" stroke-width="1"/>
<line x1="880.5" y1="295.5" x2="899.5" y2="295.5" stroke="#000" stroke-width="1"/>
<line x1="884.5" y1="300.5" x2="895.5" y2="300.5" stroke="#000" stroke-width="1"/>
<line x1="880.5" y1="305.5" x2="899.5" y2="305.5" stroke="#000" stroke-width="1"/>
<line x1="884.5" y1="310.5" x2="895.5" y2="310.5" stroke="#000" stroke-width="1"/>
<line x1="890.5" y1="289.5" x2="890.5" y2="295.5" stroke="#000" stroke-width="1"/>
<line x1="890.5" y1="310.5" x2="890.5" y2="316.5" stroke="#000" stroke-width="1"/>
<line x1="894.5" y1="290.5" x2="900.5" y2="290.5" stroke="#000" stroke-width="1"/>
<line x1="897.5" y1="287.5" x2="897.5" y2="293.5" stroke="#000" stroke-width="1"/>
<line x1="880.5" y1="400.5" x2="899.5" y2="400.5" stroke="#000" stroke-width="1"/>
<line x1="884.5" y1="405.5" x2="895.5" y2="405.5" stroke="#000" stroke-width="1"/>
<line x1="880.5" y1="409.5" x2="899.5" y2="409.5" stroke="#000" stroke-width="1"/>
<line x1="884.5" y1="414.5" x2="895.5" y2="414.5" stroke="#000" stroke-width="1"/>
<line x1="890.5" y1="394.5" x2="890.5" y2="400.5" stroke="#000" stroke-width="1"/>
<line x1="890.5" y1="414.5" x2="890.5" y2="420.5" stroke="#000" stroke-width="1"/>
<line x1="895.5" y1="394.5" x2="901.5" y2="394.5" stroke="#000" stroke-width="1"/>
<line x1="898.5" y1="391.5" x2="898.5" y2="397.5" stroke="#000" stroke-width="1"/>
<rect x="451" y="171" width="3" height="25" fill="#000"/>
<line x1="442.5" y1="162.5" x2="442.5" y2="169.5" stroke="#000" stroke-width="1"/>
<line x1="442.5" y1="169.5" x2="450.5" y2="175.5" stroke="#000" shape-rendering="auto" stroke-width="1.1"/>
<line x1="451.5" y1="190.5" x2="442.5" y2="197.5" stroke="#000" shape-rendering="auto" stroke-width="1.1"/>
<line x1="454.5" y1="183.5" x2="470.5" y2="183.5" stroke="#000" stroke-width="1"/>
<rect x="486" y="297" width="3" height="25" fill="#000"/>
<line x1="470.5" y1="309.5" x2="486.5" y2="309.5" stroke="#000" stroke-width="1"/>
<line x1="489.5" y1="302.5" x2="496.5" y2="294.5" stroke="#000" shape-rendering="auto" stroke-width="1.1"/>
<line x1="496.5" y1="294.5" x2="496.5" y2="290.5" stroke="#000" stroke-width="1"/>
<line x1="489.5" y1="316.5" x2="495.5" y2="322.5" stroke="#000" shape-rendering="auto" stroke-width="1.1"/>
<line x1="496.5" y1="322.5" x2="496.5" y2="329.5" stroke="#000" stroke-width="1"/>
<rect x="752" y="256" width="3" height="25" fill="#000"/>
<line x1="744.5" y1="248.5" x2="744.5" y2="254.5" stroke="#000" stroke-width="1"/>
<line x1="744.5" y1="254.5" x2="751.5" y2="260.5" stroke="#000" shape-rendering="auto" stroke-width="1.1"/>
<line x1="752.5" y1="275.5" x2="744.5" y2="283.5" stroke="#000" shape-rendering="auto" stroke-width="1.1"/>
<line x1="744.5" y1="283.5" x2="744.5" y2="287.5" stroke="#000" stroke-width="1"/>
<line x1="755.5" y1="268.5" x2="770.5" y2="268.5" stroke="#000" stroke-width="1"/>
<rect x="879" y="210" width="4" height="25" fill="#000"/>
<line x1="890.5" y1="202.5" x2="890.5" y2="208.5" stroke="#000" stroke-width="1"/>
<line x1="890.5" y1="208.5" x2="884.5" y2="214.5" stroke="#000" shape-rendering="auto" stroke-width="1.1"/>
<line x1="883.5" y1="229.5" x2="890.5" y2="236.5" stroke="#000" shape-rendering="auto" stroke-width="1.1"/>
<line x1="890.5" y1="236.5" x2="890.5" y2="241.5" stroke="#000" stroke-width="1"/>
<line x1="866.5" y1="222.5" x2="879.5" y2="222.5" stroke="#000" stroke-width="1"/>
<rect x="620" y="408" width="3" height="25" fill="#000"/>
<line x1="631.5" y1="398.5" x2="631.5" y2="406.5" stroke="#000" stroke-width="1"/>
<line x1="631.5" y1="406.5" x2="624.5" y2="412.5" stroke="#000" shape-rendering="auto" stroke-width="1.1"/>
<line x1="623.5" y1="427.5" x2="631.5" y2="435.5" stroke="#000" shape-rendering="auto" stroke-width="1.1"/>
<line x1="631.5" y1="435.5" x2="631.5" y2="443.5" stroke="#000" stroke-width="1"/>
<line x1="604.5" y1="420.5" x2="620.5" y2="420.5" stroke="#000" stroke-width="1"/>
<rect x="879" y="491" width="4" height="25" fill="#000"/>
<line x1="883.5" y1="496.5" x2="890.5" y2="489.5" stroke="#000" shape-rendering="auto" stroke-width="1.1"/>
<line x1="890.5" y1="489.5" x2="890.5" y2="486.5" stroke="#000" stroke-width="1"/>
<line x1="866.5" y1="503.5" x2="879.5" y2="503.5" stroke="#000" stroke-width="1"/>
<line x1="883.5" y1="510.5" x2="889.5" y2="516.5" stroke="#000" shape-rendering="auto" stroke-width="1.1"/>
<line x1="890.5" y1="517.5" x2="890.5" y2="521.5" stroke="#000" stroke-width="1"/>
<line x1="1010.5" y1="268.5" x2="1023.5" y2="268.5" stroke="#000" stroke-width="1"/>
<line x1="1023.5" y1="246.5" x2="1023.5" y2="268.5" stroke="#000" stroke-width="1"/>
<line x1="1028.5" y1="244.5" x2="1028.5" y2="250.5" stroke="#000" stroke-width="1"/>
<line x1="1028.5" y1="254.5" x2="1028.5" y2="261.5" stroke="#000" stroke-width="1"/>
<line x1="1028.5" y1="265.5" x2="1028.5" y2="271.5" stroke="#000" stroke-width="1"/>
<line x1="1028.5" y1="246.5" x2="1040.5" y2="246.5" stroke="#000" stroke-width="1"/>
<line x1="1040.5" y1="246.5" x2="1040.5" y2="237.5" stroke="#000" stroke-width="1"/>
<line x1="1030.5" y1="257.5" x2="1040.5" y2="257.5" stroke="#000" stroke-width="1"/>
<line x1="1040.5" y1="257.5" x2="1040.5" y2="268.5" stroke="#000" stroke-width="1"/>
<line x1="1028.5" y1="268.5" x2="1040.5" y2="268.5" stroke="#000" stroke-width="1"/>
<line x1="1040.5" y1="268.5" x2="1040.5" y2="277.5" stroke="#000" stroke-width="1"/>
<line x1="1010.5" y1="449.5" x2="1023.5" y2="449.5" stroke="#000" stroke-width="1"/>
<line x1="1023.5" y1="449.5" x2="1023.5" y2="471.5" stroke="#000" stroke-width="1"/>
<line x1="1028.5" y1="445.5" x2="1028.5" y2="452.5" stroke="#000" stroke-width="1"/>
<line x1="1028.5" y1="456.5" x2="1028.5" y2="462.5" stroke="#000" stroke-width="1"/>
<line x1="1028.5" y1="467.5" x2="1028.5" y2="473.5" stroke="#000" stroke-width="1"/>
<line x1="1028.5" y1="449.5" x2="1040.5" y2="449.5" stroke="#000" stroke-width="1"/>
<line x1="1040.5" y1="440.5" x2="1040.5" y2="460.5" stroke="#000" stroke-width="1"/>
<line x1="1028.5" y1="460.5" x2="1038.5" y2="460.5" stroke="#000" stroke-width="1"/>
<line x1="1028.5" y1="471.5" x2="1040.5" y2="471.5" stroke="#000" stroke-width="1"/>
<line x1="1040.5" y1="471.5" x2="1040.5" y2="480.5" stroke="#000" stroke-width="1"/>
<line x1="582.5" y1="508.5" x2="582.5" y2="529" stroke="#000"/>
<line x1="582.5" y1="539.5" x2="582.5" y2="547.5" stroke="#000"/>
<line x1="798.5" y1="538" x2="798.5" y2="558.5" stroke="#000"/>
<line x1="798.5" y1="569" x2="798.5" y2="577" stroke="#000"/>
<line x1="1204.5" y1="363.5" x2="1204.5" y2="371.5" stroke="#000" stroke-width="1"/>
<line x1="1194.5" y1="371.5" x2="1214.5" y2="371.5" stroke="#000" stroke-width="1"/>
<line x1="1198.5" y1="376.5" x2="1209.5" y2="376.5" stroke="#000" stroke-width="1"/>
<line x1="1202.5" y1="381.5" x2="1206.5" y2="381.5" stroke="#000" stroke-width="1"/>
<line x1="993.5" y1="392.5" x2="993.5" y2="400.5" stroke="#000" stroke-width="1"/>
<line x1="983.5" y1="400.5" x2="1003.5" y2="400.5" stroke="#000" stroke-width="1"/>
<line x1="987.5" y1="405.5" x2="998.5" y2="405.5" stroke="#000" stroke-width="1"/>
<line x1="991.5" y1="409.5" x2="995.5" y2="409.5" stroke="#000" stroke-width="1"/>
<line x1="547.5" y1="334.5" x2="547.5" y2="354.5" stroke="#000" stroke-width="1"/>
<line x1="542.5" y1="339.5" x2="542.5" y2="350.5" stroke="#000" stroke-width="1"/>
<line x1="537.5" y1="342.5" x2="537.5" y2="346.5" stroke="#000" stroke-width="1"/>
<line x1="548.5" y1="345.5" x2="556.5" y2="345.5" stroke="#000" stroke-width="1"/></g>
<g><path d="M270 310.5H277C277.5 291.5 290 291.5 291.5 310.5C293 329.5 305.5 329.5 306 310.5H313" fill="none" stroke="#000080" stroke-width="1.1"/>
<path d="M451 176.5L444.452 175.045L448.235 170.388Z" fill="#000"/>
<path d="M497 323.5L490.492 321.873L494.397 317.317Z" fill="#000"/>
<path d="M752 261.5L745.562 259.616L749.645 255.219Z" fill="#000"/>
<path d="M883 215.5L885.121 209.136L889.364 213.379Z" fill="#000"/>
<path d="M623 413.5L625.569 407.303L629.499 411.837Z" fill="#000"/>
<path d="M891 518L884.562 516.116L888.645 511.719Z" fill="#000"/>
<path d="M1030 257.5L1037 252.5L1037 262.5Z" fill="#000"/>
<path d="M1037.5 268.5L1040.5 265.5L1043.5 268.5L1040.5 271.5Z" fill="#0A0A5A" stroke="#0A0A5A" stroke-width="1.2"/>
<path d="M1041 460.5L1034 455.5L1034 465.5Z" fill="#000"/>
<path d="M1037.5 448.5L1040.5 445.5L1043.5 448.5L1040.5 451.5Z" fill="#0A0A5A" stroke="#0A0A5A" stroke-width="1.2"/>
<circle cx="582.5" cy="528" r="11.5" fill="none" stroke="#000"/>
<path d="M575.5 529L589.5 529L582.5 538.5Z" fill="#0000F0"/>
<circle cx="798.5" cy="557.5" r="11.5" fill="none" stroke="#000"/>
<path d="M791.5 558.5L805.5 558.5L798.5 568Z" fill="#0000F0"/>
<circle cx="1146.5" cy="102.5" r="3.1" fill="#fff" stroke="#000" stroke-width="1.15"/>
<circle cx="1157.5" cy="603.8" r="3.1" fill="#fff" stroke="#000" stroke-width="1.15"/>
<path d="M493.5 102.5L496.5 99.5L499.5 102.5L496.5 105.5Z" fill="#0A0A5A" stroke="#0A0A5A" stroke-width="1.2"/>
<path d="M633.5 102.5L636.5 99.5L639.5 102.5L636.5 105.5Z" fill="#0A0A5A" stroke="#0A0A5A" stroke-width="1.2"/>
<path d="M741.5 102.5L744.5 99.5L747.5 102.5L744.5 105.5Z" fill="#0A0A5A" stroke="#0A0A5A" stroke-width="1.2"/>
<path d="M795.5 102.5L798.5 99.5L801.5 102.5L798.5 105.5Z" fill="#0A0A5A" stroke="#0A0A5A" stroke-width="1.2"/>
<path d="M887.5 102.5L890.5 99.5L893.5 102.5L890.5 105.5Z" fill="#0A0A5A" stroke="#0A0A5A" stroke-width="1.2"/>
<path d="M1037.5 102.5L1040.5 99.5L1043.5 102.5L1040.5 105.5Z" fill="#0A0A5A" stroke="#0A0A5A" stroke-width="1.2"/>
<path d="M439.5 309.5L442.5 306.5L445.5 309.5L442.5 312.5Z" fill="#0A0A5A" stroke="#0A0A5A" stroke-width="1.2"/>
<path d="M633.5 183.5L636.5 180.5L639.5 183.5L636.5 186.5Z" fill="#0A0A5A" stroke="#0A0A5A" stroke-width="1.2"/>
<path d="M741.5 183.5L744.5 180.5L747.5 183.5L744.5 186.5Z" fill="#0A0A5A" stroke="#0A0A5A" stroke-width="1.2"/>
<path d="M795.5 222.5L798.5 219.5L801.5 222.5L798.5 225.5Z" fill="#0A0A5A" stroke="#0A0A5A" stroke-width="1.2"/>
<path d="M887.5 268.5L890.5 265.5L893.5 268.5L890.5 271.5Z" fill="#0A0A5A" stroke="#0A0A5A" stroke-width="1.2"/>
<path d="M628.5 345.5L631.5 342.5L634.5 345.5L631.5 348.5Z" fill="#0A0A5A" stroke="#0A0A5A" stroke-width="1.2"/>
<path d="M711.5 345.5L714.5 342.5L717.5 345.5L714.5 348.5Z" fill="#0A0A5A" stroke="#0A0A5A" stroke-width="1.2"/>
<path d="M1037.5 345.5L1040.5 342.5L1043.5 345.5L1040.5 348.5Z" fill="#0A0A5A" stroke="#0A0A5A" stroke-width="1.2"/>
<path d="M628.5 387.5L631.5 384.5L634.5 387.5L631.5 390.5Z" fill="#0A0A5A" stroke="#0A0A5A" stroke-width="1.2"/>
<path d="M579.5 420.5L582.5 417.5L585.5 420.5L582.5 423.5Z" fill="#0A0A5A" stroke="#0A0A5A" stroke-width="1.2"/>
<path d="M887.5 371.5L890.5 368.5L893.5 371.5L890.5 374.5Z" fill="#0A0A5A" stroke="#0A0A5A" stroke-width="1.2"/>
<path d="M887.5 449.5L890.5 446.5L893.5 449.5L890.5 452.5Z" fill="#0A0A5A" stroke="#0A0A5A" stroke-width="1.2"/>
<path d="M628.5 503.5L631.5 500.5L634.5 503.5L631.5 506.5Z" fill="#0A0A5A" stroke="#0A0A5A" stroke-width="1.2"/>
<path d="M741.5 503.5L744.5 500.5L747.5 503.5L744.5 506.5Z" fill="#0A0A5A" stroke="#0A0A5A" stroke-width="1.2"/>
<path d="M829.5 503.5L832.5 500.5L835.5 503.5L832.5 506.5Z" fill="#0A0A5A" stroke="#0A0A5A" stroke-width="1.2"/>
<path d="M628.5 604.5L631.5 601.5L634.5 604.5L631.5 607.5Z" fill="#0A0A5A" stroke="#0A0A5A" stroke-width="1.2"/>
<path d="M709.5 604.5L712.5 601.5L715.5 604.5L712.5 607.5Z" fill="#0A0A5A" stroke="#0A0A5A" stroke-width="1.2"/>
<path d="M795.5 604.5L798.5 601.5L801.5 604.5L798.5 607.5Z" fill="#0A0A5A" stroke="#0A0A5A" stroke-width="1.2"/>
<path d="M887.5 604.5L890.5 601.5L893.5 604.5L890.5 607.5Z" fill="#0A0A5A" stroke="#0A0A5A" stroke-width="1.2"/>
<path d="M1037.5 604.5L1040.5 601.5L1043.5 604.5L1040.5 607.5Z" fill="#0A0A5A" stroke="#0A0A5A" stroke-width="1.2"/></g>
<g font-family="Liberation Mono" font-size="12" letter-spacing="-0.05" fill="#222" text-rendering="geometricPrecision"><text transform="translate(367.5,134) scale(1.11,0.97)">2.13meg</text>
<text transform="translate(391.5,187) scale(1.11,0.97)">BC557C</text>
<text transform="translate(645.5,140) scale(1.11,0.97)">100p</text>
<text transform="translate(698.5,144) scale(1.11,0.97)">220k</text>
<text transform="translate(698.5,218) scale(1.11,0.97)">620k</text>
<text transform="translate(806.5,147) scale(1.11,0.97)">2k</text>
<text transform="translate(900.5,150) scale(1.11,0.97)">51</text>
<text transform="translate(888.5,228) scale(1.11,0.97)">BC557B</text>
<text transform="translate(1134.5,120) scale(1.11,0.97)">12V</text>
<text transform="translate(260.5,287) scale(1.11,0.97)">−1u/1uV</text>
<text transform="translate(276.5,334) scale(1.11,0.97)">1kHz</text>
<text transform="translate(381.5,300) scale(1.11,0.97)">1k</text>
<text transform="translate(498.5,311) scale(1.11,0.97)">BC547C</text>
<text transform="translate(577.5,336) scale(1.11,0.97)">330</text>
<text transform="translate(692.5,272) scale(1.11,0.97)">BC557C</text>
<text transform="translate(656.5,296) scale(1.11,0.97)">10p</text>
<text transform="translate(666.5,336) scale(1.11,0.97)">1k</text>
<text transform="translate(946.5,259) scale(1.11,0.97)">100</text>
<text transform="translate(903.5,306) scale(1.11,0.97)">2.638V</text>
<text transform="translate(1052.5,259) scale(1.11,0.97)">BS170</text>
<text transform="translate(1050.5,318) scale(1.11,0.97)">10</text>
<text transform="translate(1077.5,336) scale(1.11,0.97)">22</text>
<text transform="translate(1157.5,336) scale(1.11,0.97)">32</text>
<text transform="translate(1050.5,402) scale(1.11,0.97)">10</text>
<text transform="translate(531.5,411) scale(1.11,0.97)">330</text>
<text transform="translate(564.5,403) scale(1.11,0.97)">BC557C</text>
<text transform="translate(653.5,404) scale(1.11,0.97)">390k</text>
<text transform="translate(932.5,389) scale(1.11,0.97)">33k</text>
<text transform="translate(908.5,409) scale(1.11,0.97)">3.8V</text>
<text transform="translate(840.5,435) scale(1.11,0.97)">3.3p</text>
<text transform="translate(944.5,440) scale(1.11,0.97)">100</text>
<text transform="translate(1045.5,462) scale(1.11,0.97)">ZVP2106</text>
<text transform="translate(891.5,505) scale(1.11,0.97)">BC547B</text>
<text transform="translate(813.5,560) scale(1.11,0.97)">440uA</text>
<text transform="translate(900.5,566) scale(1.11,0.97)">47</text>
<text transform="translate(503.5,530) scale(1.11,0.97)">357.9uA</text>
<text transform="translate(639.5,559) scale(1.11,0.97)">2k</text>
<text transform="translate(1143.5,595) scale(1.11,0.97)">−12V</text></g></svg>
<div class="a" style="left:1261px;top:83px;width:18px;height:874px;background:linear-gradient(90deg,#F3F1EC,#FEFEFB 60%,#F6F5F0)"></div>
<div class="sbtn" style="left:1262px;top:83px;width:16px;height:16px"><svg style="left:3px;top:4px" width="9" height="6"><path d="M0.8 5.2L4.5 1.5L8.2 5.2" stroke="#4D6185" stroke-width="2" fill="none"/></svg></div>
<div class="sbtn" style="left:1262px;top:99px;width:16px;height:176px;background:linear-gradient(90deg,#C8D7FC,#C4D3FB 60%,#B4C8F8)"></div>
<svg style="left:1265px;top:183px" width="8" height="9"><path d="M0 0.5H7M0 2.5H7M0 4.5H7M0 6.5H7" stroke="#EEF4FF"/><path d="M1 1.5H8M1 3.5H8M1 5.5H8M1 7.5H8" stroke="#8A9CC8"/></svg>
<div class="sbtn" style="left:1262px;top:940px;width:16px;height:16px"><svg style="left:3px;top:5px" width="9" height="6"><path d="M0.8 0.8L4.5 4.5L8.2 0.8" stroke="#4D6185" stroke-width="2" fill="none"/></svg></div>
<div class="a" style="left:176px;top:957px;width:1085px;height:16px;background:linear-gradient(#F3F1EC,#FEFEFB 60%,#F6F5F0)"></div>
<div class="sbtn" style="left:176px;top:957px;width:16px;height:16px"><svg style="left:4px;top:3px" width="6" height="9"><path d="M5.2 0.8L1.5 4.5L5.2 8.2" stroke="#4D6185" stroke-width="2" fill="none"/></svg></div>
<div class="sbtn" style="left:192px;top:957px;width:274px;height:16px;background:linear-gradient(#C8D7FC,#C4D3FB 60%,#B4C8F8)"><svg style="left:131px;top:3px" width="9" height="8"><path d="M0.5 0V7M2.5 0V7M4.5 0V7M6.5 0V7" stroke="#EEF4FF"/><path d="M1.5 1V8M3.5 1V8M5.5 1V8M7.5 1V8" stroke="#8A9CC8"/></svg></div>
<div class="sbtn" style="left:1244px;top:957px;width:16px;height:16px"><svg style="left:5px;top:3px" width="6" height="9"><path d="M0.8 0.8L4.5 4.5L0.8 8.2" stroke="#4D6185" stroke-width="2" fill="none"/></svg></div>
<div class="a" style="left:1261px;top:957px;width:18px;height:17px;background:#ECE9D8"></div>
<div class="a" style="left:174px;top:972px;width:1106px;height:1px;background:#E2E0D6"></div><div class="a" style="left:174px;top:973px;width:1106px;height:2px;background:#F8F7F0"></div>
<div class="a" style="left:1279px;top:75px;width:1px;height:900px;background:#D8D4C4"></div>

<div id="status" class="a">
  <div class="a" style="left:0;top:2px;width:1280px;height:1px;background:#A5A292"></div><div class="a" style="left:50px;top:3px;width:2px;height:15px;border-left:1px solid #D0CCBA;border-right:1px solid #fff"></div>
</div>
<div id="task" class="a">
<div class="a" style="left:0;top:0;width:98px;height:30px;border-radius:0 9px 9px 0;background:linear-gradient(#3B8F3B 0px,#5CB85C 2px,#46A646 6px,#379A37 14px,#349634 22px,#2D882D 27px,#246E24 30px);box-shadow:inset -2px 0 3px #1E601E"></div>
<svg style="left:11px;top:6px" width="20" height="19" viewBox="0 0 20 19">
 <path d="M2 2.5C4 1.5 6.5 1.2 9 2.4L8 8.6C5.6 7.6 3.3 7.8 1 8.8Z" fill="#E8602A"/>
 <path d="M10.5 2.8C13 4 15.5 4 18.5 2.8L17.3 9C14.8 10 12.3 10 9.6 9Z" fill="#58B82A"/>
 <path d="M0.8 10.3C3.2 9.3 5.5 9.1 7.8 10.1L6.8 16.3C4.5 15.3 2.2 15.4 -0.2 16.4Z" fill="#3A78E8"/>
 <path d="M9.3 10.6C11.9 11.7 14.4 11.7 17 10.6L15.9 16.8C13.3 17.8 10.8 17.8 8.3 16.8Z" fill="#F0C020"/>
</svg>
<div class="a" style="left:35px;top:4px;color:#fff;font-weight:bold;font-style:italic;font-size:17px;text-shadow:1px 1px 1px #1A4A1A;letter-spacing:0.2px">Start</div>
<div class="a" style="left:108px;top:4px;width:159px;height:24px;border-radius:3px;background:#1E50C4;box-shadow:inset 1px 1px #1840A0,inset -1px -1px #3A70E0"></div>
<svg style="left:119px;top:8px" width="16" height="16" viewBox="0 0 16 16">
 <rect x="0" y="0" width="16" height="16" fill="#FBE8F8"/>
 <path d="M2 3.5H10M2 5.5H10M3.5 3V14H8M7.5 5V12" stroke="#333" stroke-width="1" fill="none"/>
 <circle cx="11.5" cy="4" r="2.5" fill="#D02010"/><path d="M11 1.5L15 4L11 6.5Z" fill="#D02010"/>
 <ellipse cx="12" cy="11.5" rx="3" ry="2.3" fill="#1010C0"/>
 <ellipse cx="5" cy="13" rx="2.3" ry="2" fill="#20B040"/>
</svg>
<div class="a" style="left:138px;top:9px;color:#fff;font-size:11.5px;letter-spacing:-0.4px">CircuitMaker</div>
<div class="a" style="left:1098px;top:9px;color:#fff;font-size:11.5px">HU</div>
<div class="a" style="left:1134px;top:0;width:146px;height:30px;background:linear-gradient(#1D8FE8 0px,#2CA8F8 2px,#159AEE 8px,#1293E8 22px,#1A86D8 28px,#1574C8 30px);border-left:1px solid #0A4AB8;box-shadow:inset 1px 0 #3AB0FF"></div>
<svg style="left:1140px;top:0" width="100" height="30" viewBox="1140 994 100 30">
 <path d="M1145 1015L1152 1009L1158 1003L1160 1005L1154 1013L1149 1017Z" fill="#30A030"/>
 <path d="M1150 1012L1158 1004" stroke="#E03030" stroke-width="1.5"/><path d="M1152 1014L1160 1006" stroke="#3060F0" stroke-width="1.5"/>
 <path d="M1145 1016H1158" stroke="#F0F0F0" stroke-width="2"/>
 <path d="M1163 1003L1169.5 1001L1176 1003V1009C1176 1013 1173 1016 1169.5 1018C1166 1016 1163 1013 1163 1009Z" fill="#D82020" stroke="#fff" stroke-width="0.8"/>
 <path d="M1167 1006.5L1172 1011.5M1172 1006.5L1167 1011.5" stroke="#fff" stroke-width="1.5"/>
 <path d="M1181 1006H1184L1189 1002V1017L1184 1013H1181Z" fill="#F08020" stroke="#402000" stroke-width="0.8"/>
 <path d="M1191 1005C1193 1008 1193 1011 1191 1014M1194 1003C1197 1007 1197 1012 1194 1016" stroke="#102040" stroke-width="1.2" fill="none"/>
 <circle cx="1205" cy="1008" r="5.5" fill="#A0A8B0" stroke="#404850" stroke-width="0.8"/><circle cx="1204" cy="1007" r="2.2" fill="#505860"/>
 <path d="M1207 1017L1213 1011" stroke="#C0D8F0" stroke-width="1.5"/>
 <path d="M1219 1004L1224 1001L1230 1004V1015L1224 1019L1219 1015Z" fill="#1820A8"/>
 <path d="M1222 1006L1227 1013L1224.5 1015.5V1003.5L1227 1006L1222 1013" stroke="#E02020" stroke-width="1.2" fill="none"/>
</svg>
<div class="a" style="left:1242px;top:9px;color:#fff;font-size:11.5px">7:55</div>

</div>
</body></html>
